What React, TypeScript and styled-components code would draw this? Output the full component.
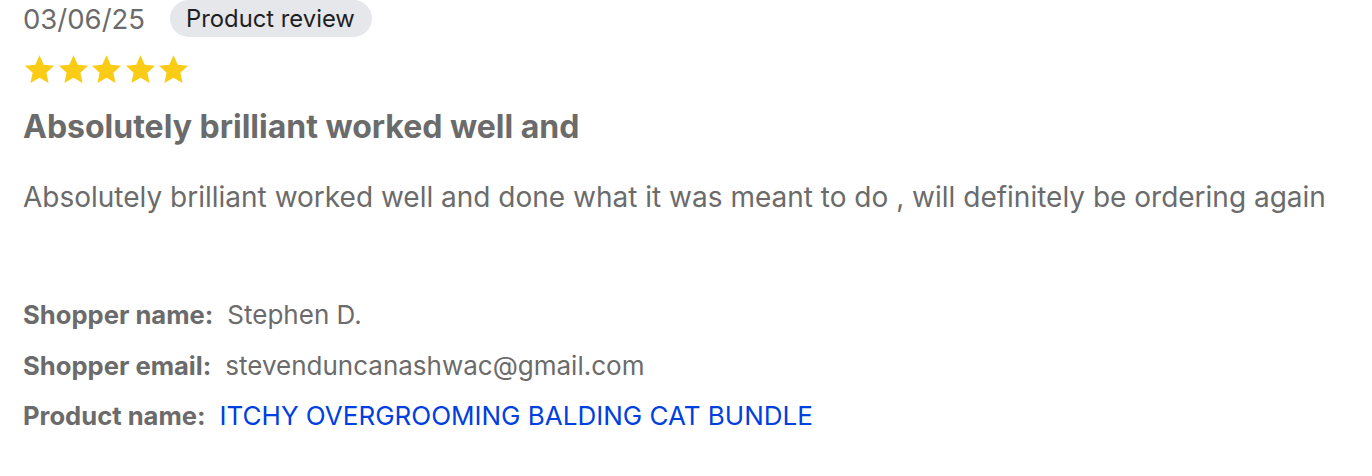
import React from "react";
import styled, { createGlobalStyle } from "styled-components";

const Global = createGlobalStyle`
  html, body { margin: 0; padding: 0; background: #fff; }
  body { font-family: Inter, "Noto Sans", Arial, sans-serif; }
`;

const Card = styled.div`
  padding: 0 23px;
  display: flex;
  flex-direction: column;
`;

const TopRow = styled.div`
  display: flex;
  align-items: center;
  gap: 25px;
  height: 37px;
`;

const DateText = styled.span`
  font-size: 27.5px;
  color: #6b6b6b;
`;

const Badge = styled.span`
  display: inline-flex;
  align-items: center;
  height: 37px;
  padding: 0 17px 0 16px;
  border-radius: 999px;
  background: #e5e7eb;
  color: #1f1f1f;
  font-size: 23.8px;
`;

const Stars = styled.div`
  display: flex;
  gap: 0.5px;
  margin-top: 16px;
`;

const Title = styled.h2`
  margin: 23px 0 0;
  font-size: 32px;
  font-weight: 700;
  color: #6b6b6b;
  line-height: 36px;
`;

const Body = styled.p`
  margin: 34px 0 0;
  font-size: 28px;
  color: #6b6b6b;
  line-height: 36px;
`;

const Details = styled.div`
  margin-top: 85px;
  display: flex;
  flex-direction: column;
  gap: 20.5px;
`;

const Row = styled.div`
  display: flex;
  align-items: baseline;
  gap: 14px;
  font-size: 26px;
  line-height: 30px;
`;

const Label = styled.span`
  font-weight: 700;
  font-size: 25.6px;
  color: #6b6b6b;
`;

const Value = styled.span<{ $link?: boolean }>`
  color: ${(p) => (p.$link ? "#0040e0" : "#6b6b6b")};
`;

const Star = () => (
  <svg width="33" height="33" viewBox="0 0 24 24">
    <path
      fill="#facc15"
      d="M12 1.6l3.1 6.9 7.5.8-5.6 5.1 1.6 7.4L12 18l-6.6 3.8 1.6-7.4-5.6-5.1 7.5-.8z"
    />
  </svg>
);

export default function App() {
  return (
    <>
      <Global />
      <Card>
        <TopRow>
          <DateText>03/06/25</DateText>
          <Badge>Product review</Badge>
        </TopRow>
        <Stars>
          {[0, 1, 2, 3, 4].map((i) => (
            <Star key={i} />
          ))}
        </Stars>
        <Title>Absolutely brilliant worked well and</Title>
        <Body>
          Absolutely brilliant worked well and done what it was meant to do , will definitely be
          ordering again
        </Body>
        <Details>
          <Row>
            <Label>Shopper name:</Label>
            <Value>Stephen D.</Value>
          </Row>
          <Row>
            <Label>Shopper email:</Label>
            <Value>stevenduncanashwac@gmail.com</Value>
          </Row>
          <Row>
            <Label>Product name:</Label>
            <Value $link>ITCHY OVERGROOMING BALDING CAT BUNDLE</Value>
          </Row>
        </Details>
      </Card>
    </>
  );
}
